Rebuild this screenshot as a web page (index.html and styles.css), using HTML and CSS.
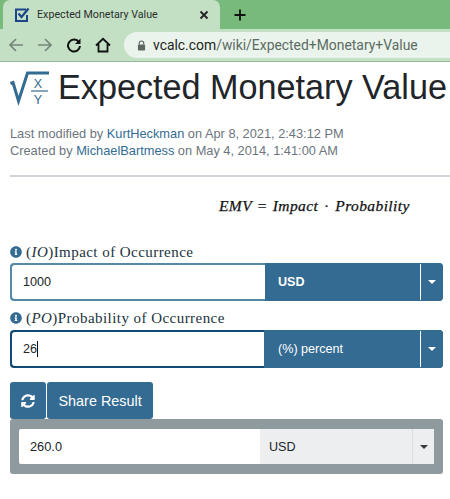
FILE: index.html
```html
<!DOCTYPE html>
<html lang="en">
<head>
<meta charset="utf-8">
<title>Expected Monetary Value</title>
<link rel="stylesheet" href="styles.css">
</head>
<body>
<header class="browser">
  <div class="tabstrip">
    <div class="tab">
      <svg class="favicon" viewBox="0 0 16 16" width="16" height="16"><path d="M12 2.500H2v11.500h11V8" fill="none" stroke="#1c4587" stroke-width="2"/><path d="M4.500 6.500 7.500 10 14.500 1.500" fill="none" stroke="#1c4587" stroke-width="2.200"/></svg>
      <span class="tab-title">Expected Monetary Value</span>
      <svg class="tab-close" viewBox="0 0 10 10" width="10" height="10"><path d="M1.500 1.500 8.500 8.500M8.500 1.500 1.500 8.500" stroke="#222" stroke-width="1.800"/></svg>
    </div>
    <svg class="new-tab" viewBox="0 0 12 12" width="12" height="12"><path d="M6 0.500V11.500M0.500 6H11.500" stroke="#111" stroke-width="1.800"/></svg>
  </div>
  <div class="toolbar">
    <svg class="tool" viewBox="0 0 16 16" width="16" height="16"><path d="M15 8H2.500M8 2 2 8l6 6" fill="none" stroke="#77857b" stroke-width="1.700"/></svg>
    <svg class="tool" viewBox="0 0 16 16" width="16" height="16"><path d="M1 8h12.500M8 2l6 6-6 6" fill="none" stroke="#77857b" stroke-width="1.700"/></svg>
    <svg class="tool" viewBox="0 0 16 16" width="16" height="16"><path d="M13 5.200A6 6 0 1 0 14 9" fill="none" stroke="#111" stroke-width="2"/><path d="M14.500 1.500V7H9z" fill="#111"/></svg>
    <svg class="tool" viewBox="0 0 16 16" width="16" height="16"><path d="M1 8.500 8 1.800l7 6.700M3.500 7v7.500h9V7" fill="none" stroke="#111" stroke-width="1.800"/></svg>
    <div class="omnibox">
      <svg class="lock" viewBox="0 0 10 12" width="9" height="11"><path d="M2.500 5V3.500a2.500 2.500 0 0 1 5 0V5" fill="none" stroke="#5f6763" stroke-width="1.300"/><rect x="1" y="5" width="8" height="6.500" rx="1" fill="#5f6763"/></svg>
      <span class="url"><span class="host">vcalc.com</span>/wiki/Expected+Monetary+Value</span>
    </div>
  </div>
</header>
<main class="page">
  <div class="title-row">
    <svg class="logo" viewBox="0 0 40 38" width="40" height="38">
      <path d="M.5 15.500 3 14.500 8.500 33 17.500 5H39" fill="none" stroke="#336b92" stroke-width="3"/>
      <text x="28" y="20" class="logo-text">X</text>
      <path d="M21 23H38" stroke="#336b92" stroke-width="1.200"/>
      <text x="28" y="36" class="logo-text">Y</text>
    </svg>
    <h1 class="title">Expected Monetary Value</h1>
  </div>
  <p class="meta">Last modified by <a class="link">KurtHeckman</a> on Apr 8, 2021, 2:43:12 PM<br>Created by <a class="link">MichaelBartmess</a> on May 4, 2014, 1:41:00 AM</p>
  <hr class="rule">
  <div class="formula"><i>EMV</i> = <i>Impact</i> · <i>Probability</i></div>

  <label class="field-label"><svg class="info" viewBox="0 0 512 512" width="12" height="12"><path fill="#336b92" d="M256 8C119.043 8 8 119.083 8 256c0 136.997 111.043 248 248 248s248-111.003 248-248C504 119.083 392.957 8 256 8zm0 110c23.196 0 42 18.804 42 42s-18.804 42-42 42-42-18.804-42-42 18.804-42 42-42zm56 254c0 6.627-5.373 12-12 12h-88c-6.627 0-12-5.373-12-12v-24c0-6.627 5.373-12 12-12h12v-64h-12c-6.627 0-12-5.373-12-12v-24c0-6.627 5.373-12 12-12h64c6.627 0 12 5.373 12 12v100h12c6.627 0 12 5.373 12 12v24z"/></svg><span>(<i>IO</i>)Impact of Occurrence</span></label>
  <div class="group">
    <div class="input">1000</div>
    <div class="select"><span class="select-text bold">USD</span><span class="caret-box"><span class="caret"></span></span></div>
  </div>

  <label class="field-label second"><svg class="info" viewBox="0 0 512 512" width="12" height="12"><path fill="#336b92" d="M256 8C119.043 8 8 119.083 8 256c0 136.997 111.043 248 248 248s248-111.003 248-248C504 119.083 392.957 8 256 8zm0 110c23.196 0 42 18.804 42 42s-18.804 42-42 42-42-18.804-42-42 18.804-42 42-42zm56 254c0 6.627-5.373 12-12 12h-88c-6.627 0-12-5.373-12-12v-24c0-6.627 5.373-12 12-12h12v-64h-12c-6.627 0-12-5.373-12-12v-24c0-6.627 5.373-12 12-12h64c6.627 0 12 5.373 12 12v100h12c6.627 0 12 5.373 12 12v24z"/></svg><span>(<i>PO</i>)Probability of Occurrence</span></label>
  <div class="group focused">
    <div class="input">26<span class="cursor"></span></div>
    <div class="select"><span class="select-text">(%) percent</span><span class="caret-box"><span class="caret"></span></span></div>
  </div>

  <div class="actions">
    <button class="btn btn-icon" type="button" aria-label="Refresh"><svg viewBox="0 0 512 512" width="14" height="14"><path fill="#fff" d="M370.72 133.28C339.458 104.008 298.888 87.962 255.848 88c-77.458.068-144.328 53.178-162.791 126.85-1.344 5.363-6.122 9.15-11.651 9.15H24.103c-7.498 0-13.194-6.807-11.807-14.176C33.933 94.924 134.813 8 256 8c66.448 0 126.791 26.136 171.315 68.685L463.03 40.97C478.149 25.851 504 36.559 504 57.941V192c0 13.255-10.745 24-24 24H345.941c-21.382 0-32.09-25.851-16.971-40.971l41.75-41.749zM32 296h134.059c21.382 0 32.09 25.851 16.971 40.971l-41.75 41.75c31.262 29.273 71.835 45.319 114.876 45.28 77.418-.07 144.315-53.144 162.787-126.849 1.344-5.363 6.122-9.15 11.651-9.15h57.304c7.498 0 13.194 6.807 11.807 14.176C478.067 417.076 377.187 504 256 504c-66.448 0-126.791-26.136-171.315-68.685L48.97 471.03C33.851 486.149 8 475.441 8 454.059V320c0-13.255 10.745-24 24-24z"/></svg></button>
    <button class="btn" type="button">Share Result</button>
  </div>
  <div class="result">
    <div class="result-value">260.0</div>
    <div class="result-unit"><span class="result-unit-text">USD</span><span class="result-caret-box"><span class="result-caret"></span></span></div>
  </div>
</main>
</body>
</html>
```
FILE: styles.css
```css
* { box-sizing: border-box; }
html, body { margin: 0; height: 499px; overflow: hidden; background: #fff; }
body { font-family: "Liberation Sans", Arial, sans-serif; color: #212529; }

.browser { height: 62px; }
.tabstrip { height: 29px; background: #78b97c; display: flex; align-items: center; }
.tab { width: 217px; height: 29px; margin-left: 3px; background: #c3e0c5; border-radius: 7px 7px 0 0; display: flex; align-items: center; padding: 0 0 0 11px; }
.favicon { flex: none; }
.tab-title { font: 10.700px "Roboto", "Liberation Sans", sans-serif; color: #2b2f2c; margin-left: 7px; flex: 1; white-space: nowrap; }
.tab-close { margin-right: 11px; flex: none; }
.new-tab { margin-left: 14px; }
.toolbar { height: 33px; background: #c3e0c5; border-bottom: 1px solid #96b99a; display: flex; align-items: center; padding-left: 8px; }
.tool { flex: none; margin-right: 13px; }
.omnibox { flex: 1; height: 26px; background: #eaf4ed; border-radius: 13px 0 0 13px; display: flex; align-items: center; padding-left: 13px; }
.lock { flex: none; }
.url { font: 13.900px "Roboto", "Liberation Sans", sans-serif; color: #5d6b62; margin-left: 7px; white-space: nowrap; }
.host { color: #1d2620; }

.page { padding-left: 10px; }
.title-row { display: flex; align-items: center; height: 50px; }
.logo { flex: none; }
.logo-text { font: 12.500px "Liberation Sans", sans-serif; fill: #336b92; text-anchor: middle; }
.title { margin: 0 0 0 8px; font-size: 34.200px; font-weight: 400; white-space: nowrap; line-height: 50px; color: #212529; }
.meta { margin: 13px 0 0; font-size: 12.800px; line-height: 17px; color: #6c757d; }
.link { color: #336b92; }
.rule { margin: 16px 0 0; border: 0; height: 2px; background: #ced4da; }
.formula { margin: 20px 0 0 209px; font: 15.500px/17px "Liberation Serif", serif; color: #111; height: 17px; white-space: nowrap; letter-spacing: .4px; word-spacing: 1.500px; -webkit-text-stroke: .25px #111; }

.field-label { display: flex; align-items: center; gap: 4px; margin-top: 30px; height: 16px; font: 15px/16px "Liberation Serif", serif; letter-spacing: .45px; color: #22323c; white-space: pre; }
.field-label.second { margin-top: 9px; }
.info { flex: none; }
.group { display: flex; width: 433px; height: 38px; margin-top: 3px; border-radius: 4px; overflow: hidden; background: #5688a8; }
.input { width: 253px; margin: 2px 0 2px 2px; background: #fff; border-radius: 3px 0 0 3px; font-size: 12.600px; line-height: 34px; padding-left: 11px; color: #212529; display: flex; align-items: center; }
.focused { background: #124a73; margin-top: 4px; }
.focused .input { width: 252px; }
.cursor { display: inline-block; width: 1px; height: 16px; background: #111; }
.select { flex: 1; display: flex; background: #336b92; color: #fff; font-size: 12.600px; align-items: center; }
.select-text { flex: 1; padding-left: 13px; }
.focused .select-text { padding-left: 14px; }
.bold { font-weight: 700; }
.caret-box { flex: none; width: 23px; height: 36px; border-left: 1px solid #fff; display: flex; align-items: center; justify-content: center; }
.caret { width: 0; height: 0; border: 4.500px solid transparent; border-top-color: #fff; border-bottom: 0; }

.actions { display: flex; gap: 1px; margin-top: 14px; }
.btn { height: 37px; border: 0; background: #336b92; color: #fff; font: 14.400px "Liberation Sans", sans-serif; border-radius: 3px; padding: 0 11.500px; }
.btn-icon { width: 36px; padding: 0; display: flex; align-items: center; justify-content: center; }

.result { width: 433px; height: 55px; padding: 10px 9px; background: #8f9a9f; border-radius: 3px; display: flex; }
.result-value { width: 241px; background: #fff; font-size: 12.800px; line-height: 35px; padding-left: 11px; border-radius: 2px 0 0 2px; color: #212529; }
.result-unit { flex: 1; background: #eceef0; display: flex; align-items: center; font-size: 12.600px; color: #212529; }
.result-unit-text { flex: 1; padding-left: 9px; }
.result-caret-box { flex: none; width: 22px; height: 35px; border-left: 1px solid #d6e0e4; display: flex; align-items: center; justify-content: center; }
.result-caret { width: 0; height: 0; border: 4.500px solid transparent; border-top-color: #343a40; border-bottom: 0; }
```
